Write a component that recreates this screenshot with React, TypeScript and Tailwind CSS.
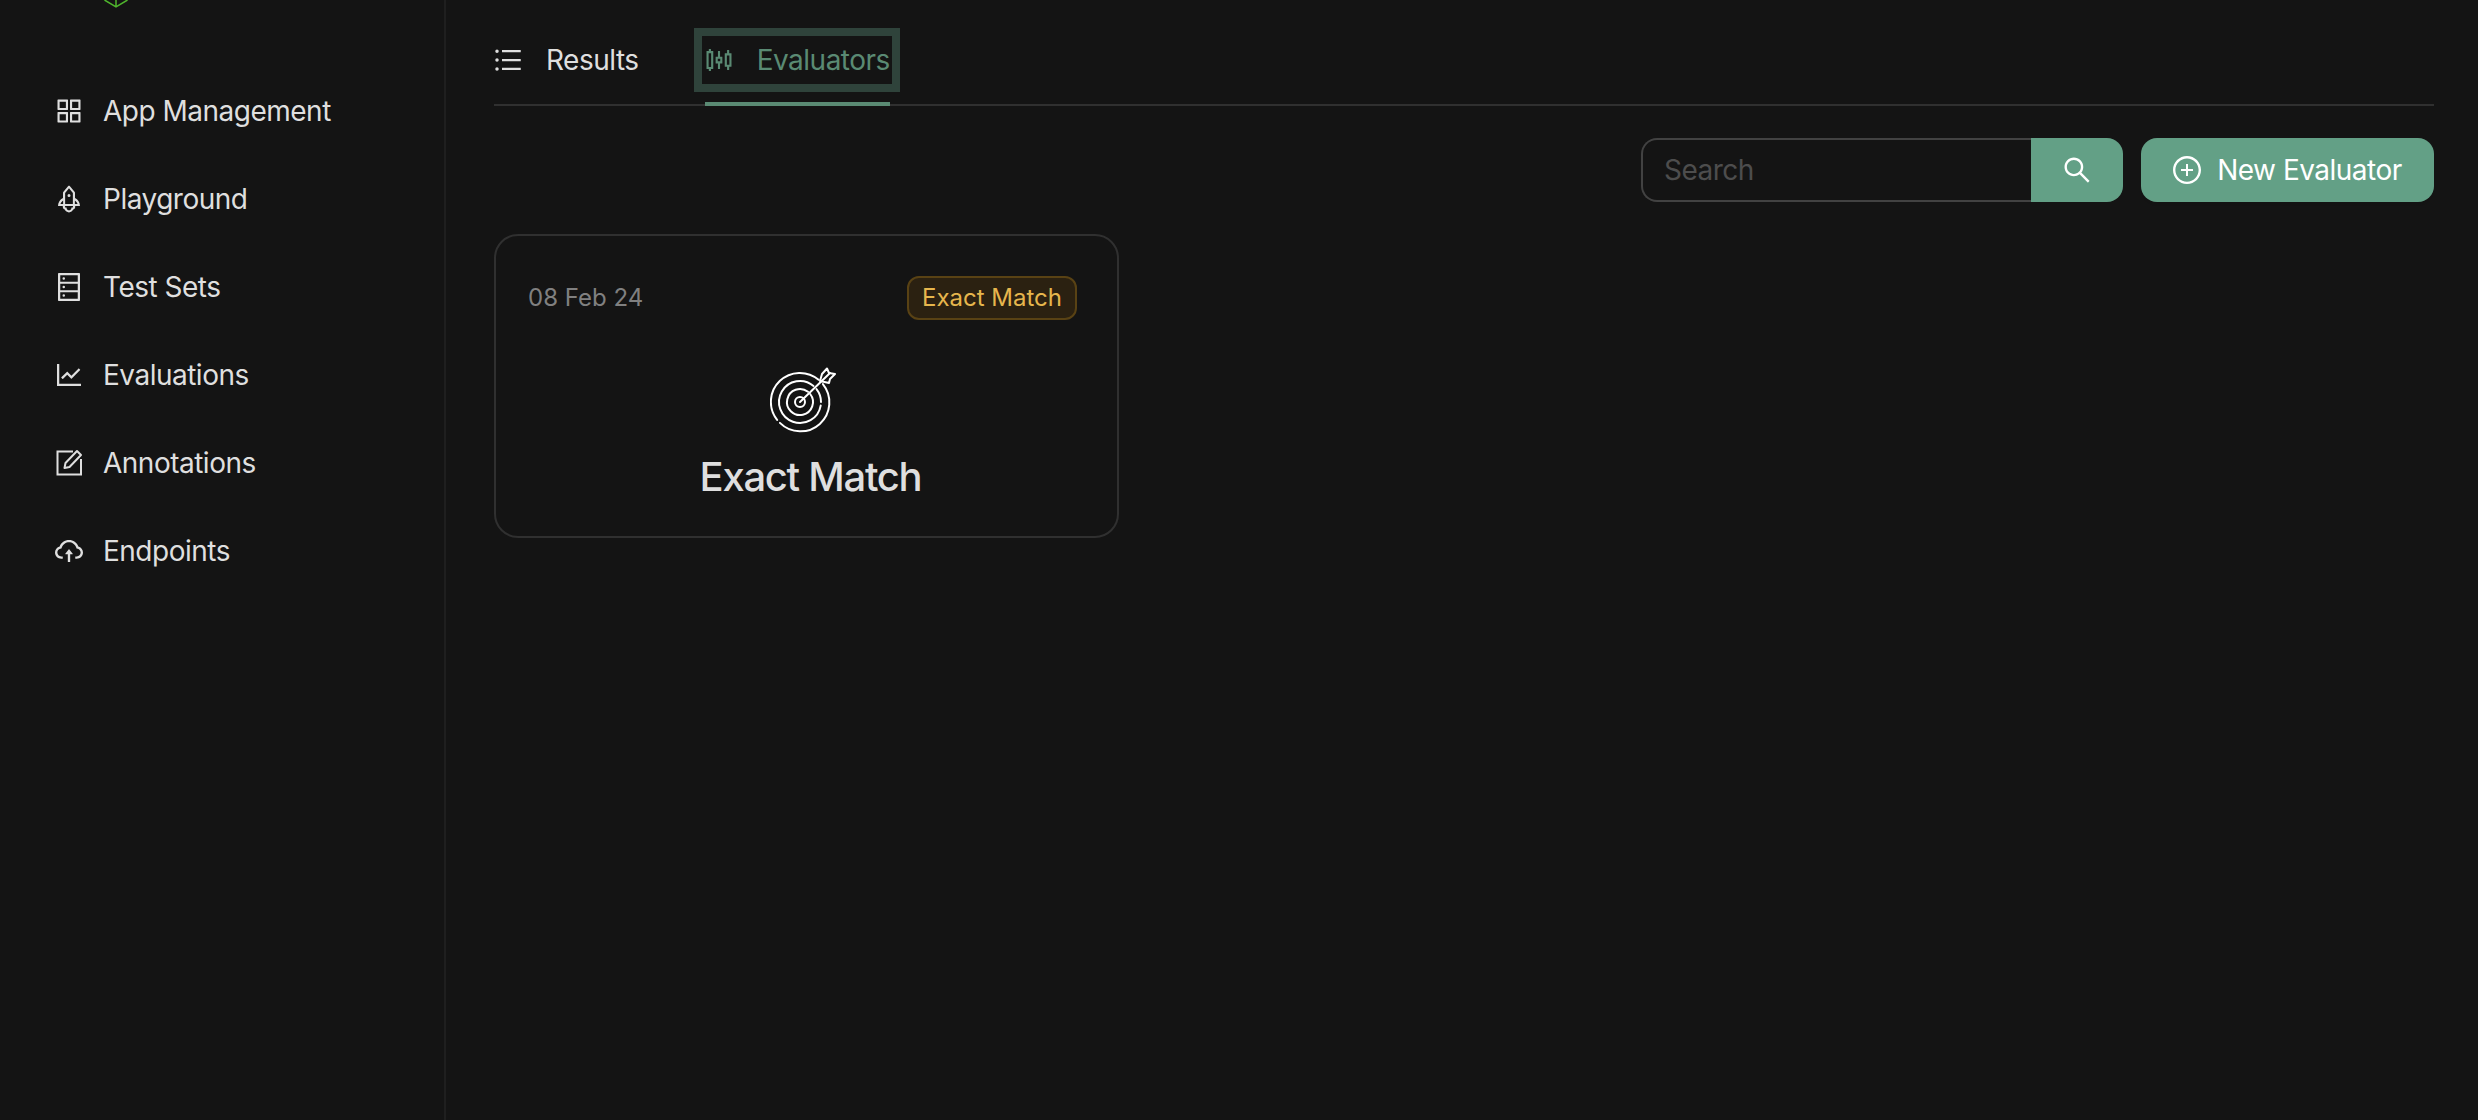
import {
  AiOutlineAppstore,
  AiOutlineCloudUpload,
  AiOutlineDatabase,
  AiOutlineLineChart,
  AiOutlinePlusCircle,
  AiOutlineRocket,
  AiOutlineSearch,
  AiOutlineSliders,
  AiOutlineUnorderedList,
} from "react-icons/ai";

function NotePenIcon({ className }: { className?: string }) {
  return (
    <svg className={className} width="32" height="32" viewBox="-2 -2 32 32" fill="none" stroke="currentColor" strokeWidth="2">
      <path d="M18 2.5H2.5V25.5H26V10" />
      <path d="M9.5 19L10.5 14L22 2L26 6L14.5 18Z" strokeLinejoin="round" />
    </svg>
  );
}

const navItems = [
  { label: "App Management", icon: AiOutlineAppstore },
  { label: "Playground", icon: AiOutlineRocket },
  { label: "Test Sets", icon: AiOutlineDatabase },
  { label: "Evaluations", icon: AiOutlineLineChart },
  { label: "Annotations", icon: NotePenIcon },
  { label: "Endpoints", icon: AiOutlineCloudUpload },
];

function TargetIcon() {
  return (
    <svg width="70" height="68" viewBox="0 0 70 68" fill="none" stroke="white" strokeWidth="2" strokeLinecap="round" strokeLinejoin="round">
      <path d="M48.6 13.8A29 29 0 0 0 7.1 53.9" />
      <path d="M9.9 56.9A29 29 0 0 0 52.9 18.1" />
      <path d="M43.5 19.9A21 21 0 1 0 50.7 39.6" />
      <path d="M51 36A21 21 0 0 0 46.5 23.1" />
      <path d="M38 25.8A13 13 0 1 0 40.2 28" />
      <circle cx="30" cy="36" r="5" />
      <path d="M30 36L60 7" />
      <path d="M50 15L52 8L57 2.5L59 7L65 8L60 13L59 17Z" />
    </svg>
  );
}

export default function App() {
  return (
    <div
      className="flex h-[1120px] overflow-hidden bg-[#141414] text-[28px] tracking-[-0.5px] text-[#dfdfdf]"
      style={{ fontFamily: "Inter, sans-serif" }}
    >
      <aside className="w-[446px] shrink-0 border-r-2 border-[#1f1f1f]">
        <svg className="ml-[104px] block" width="24" height="8" viewBox="0 0 24 8" fill="none" stroke="#4fb52d" strokeWidth="1.5">
          <path d="M0.5 0L12 6.8L23.5 0M12 0V6.8" />
        </svg>
        <nav className="mt-[63px]">
          {navItems.map(({ label, icon: Icon }) => (
            <div key={label} className="mb-2 flex h-20 items-center gap-5 pl-[55px]">
              <Icon size={32} className="-m-[2px] shrink-0" />
              <span>{label}</span>
            </div>
          ))}
        </nav>
      </aside>

      <main className="flex-1 pl-12 pr-11">
        <div className="flex h-[106px] gap-16 border-b-2 border-[#303030] pt-[38px]">
          <div className="flex h-11 items-center gap-6">
            <AiOutlineUnorderedList size={32} className="-m-[2px]" />
            <span>Results</span>
          </div>
          <div className="relative ml-[2px] flex h-11 items-center gap-6 text-[#5a8a73]">
            <AiOutlineSliders size={32} className="-m-[2px]" />
            <span>Evaluators</span>
            <div className="absolute -bottom-[2px] -left-[3px] -right-[2px] -top-[2px] outline-[8px] outline-solid outline-[#2f433b]" />
            <div className="absolute inset-x-0 top-[64px] h-1 bg-[#5a8a73]" />
          </div>
        </div>

        <div className="mt-8 flex justify-end gap-[18px]">
          <div className="flex h-16 w-[482px]">
            <div className="flex flex-1 items-center rounded-l-2xl border-2 border-r-0 border-[#424242] pl-[21px] text-[#4d4d4d]">
              Search
            </div>
            <div className="flex w-[92px] items-center justify-center rounded-r-2xl bg-[#63a086] text-white">
              <AiOutlineSearch size={32} />
            </div>
          </div>
          <div className="flex h-16 w-[293px] items-center justify-center gap-4 rounded-2xl bg-[#63a086] text-white shadow-[0_4px_0_rgba(0,0,0,0.04)]">
            <AiOutlinePlusCircle size={32} className="-m-[2px]" />
            <span>New Evaluator</span>
          </div>
        </div>

        <div className="mt-8 h-[304px] w-[625px] rounded-3xl border-2 border-[#303030] pl-8 pr-10 pt-10">
          <div className="flex items-center justify-between tracking-normal">
            <span className="text-2xl text-[#808080]">08 Feb 24</span>
            <span className="flex h-11 items-center rounded-xl border-2 border-[#594214] bg-[#2b2111] px-[13px] text-2xl text-[#e6b64d]">
              Exact Match
            </span>
          </div>
          <div className="mt-[46px] flex justify-center pl-[5px]">
            <TargetIcon />
          </div>
          <div className="mt-[19px] pl-4 text-center text-[40px] font-medium leading-[48px] tracking-[-1.3px]">Exact Match</div>
        </div>
      </main>
    </div>
  );
}
